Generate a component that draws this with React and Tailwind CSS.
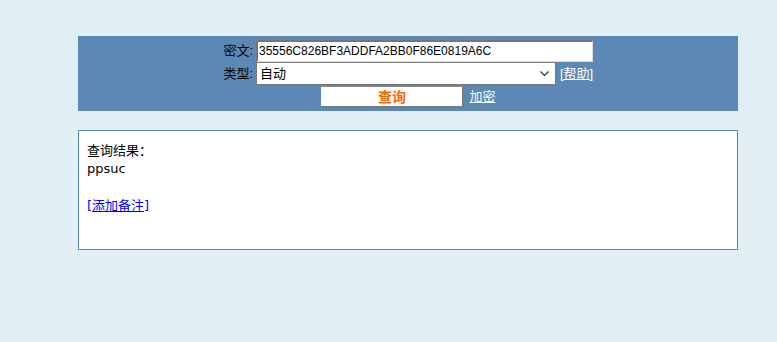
import React from 'react';

const font = { fontFamily: '"Liberation Sans", "Noto Sans CJK SC", sans-serif' };
const resultFont = { fontFamily: '"DejaVu Sans", "Noto Sans CJK SC", sans-serif' };

export default function App() {
  return (
    <div className="min-h-[342px] w-full bg-[#e1eef6] pt-[36px] text-[13px] text-black" style={font}>
      <div className="ml-[78px] w-[660px] bg-[#5b88b4] h-[75px] flex justify-center pt-[3px]">
        <div className="flex flex-col w-[374px]">
          <div className="flex items-center h-[23px]">
            <span className="w-[35px] text-right pr-[3px] leading-none">密文:</span>
            <input
              defaultValue="35556C826BF3ADDFA2BB0F86E0819A6C"
              className="w-[337px] h-[22px] bg-white border-t-2 border-l-2 border-t-[#767676] border-l-[#767676] border-r border-b border-r-[#dcdcdc] border-b-[#dcdcdc] px-[1px] text-[12px] outline-none"
            />
          </div>
          <div className="flex items-center h-[23px]">
            <span className="w-[35px] text-right pr-[3px] leading-none">类型:</span>
            <div className="relative w-[300px] h-[23px] bg-white border border-[#767676] flex items-center pl-[3px]">
              <span>自动</span>
              <svg className="absolute right-[6px] top-[8px]" width="9" height="6" viewBox="0 0 9 6" fill="none">
                <path d="M0.5 0.5 L4.5 4.5 L8.5 0.5" stroke="#333" strokeWidth="1.2" />
              </svg>
            </div>
            <a href="#" className="ml-[4px] text-white underline leading-none">[帮助]</a>
          </div>
          <div className="flex items-center justify-center h-[23px] pl-[1px]">
            <button className="w-[143px] h-[22px] bg-white border-t border-t-[#8a8a8a] border-r-2 border-b-2 border-r-[#7a7a7a] border-b-[#7a7a7a] text-[#ff6600] text-[14px] font-bold">
              查询
            </button>
            <a href="#" className="ml-[5px] text-white underline">加密</a>
          </div>
        </div>
      </div>
      <div className="ml-[78px] mt-[19px] w-[660px] h-[120px] bg-white border border-[#5b88b6] px-[8px] pt-[11px] leading-[18px]" style={resultFont}>
        <div>查询结果：</div>
        <div>ppsuc</div>
        <br />
        <a href="#" className="inline-block mt-[1px] text-[#0000ff] underline">[添加备注]</a>
      </div>
    </div>
  );
}
